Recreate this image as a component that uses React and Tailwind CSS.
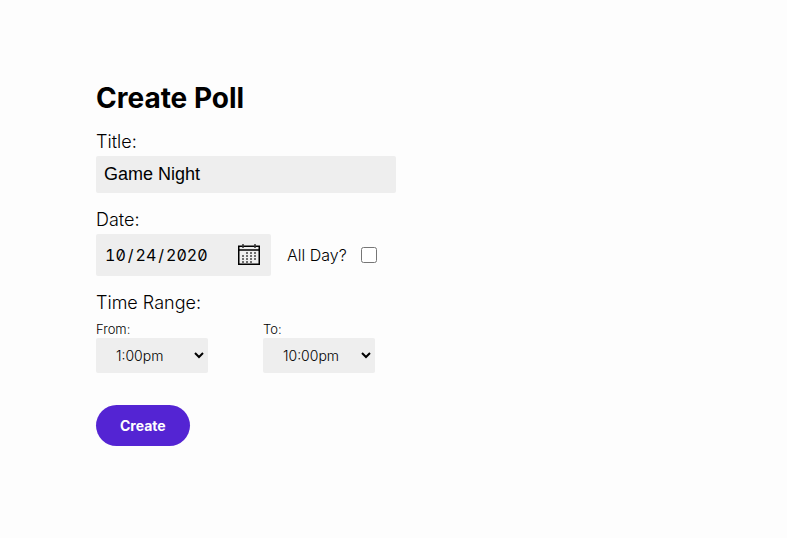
const TIMES = ['12:00pm', '1:00pm', '2:00pm', '6:00pm', '8:00pm', '10:00pm', '11:00pm']

export default function App() {
  return (
    <main className="min-h-screen bg-[#fdfdfd] px-24 py-20 font-['Inter',sans-serif] text-black">
      <h1 className="text-[28px] leading-9 font-bold">Create Poll</h1>

      <form className="mt-3" onSubmit={(e) => e.preventDefault()}>
        <label htmlFor="title" className="block text-lg leading-7 font-light">
          Title:
        </label>
        <input
          id="title"
          type="text"
          defaultValue="Game Night"
          className="block h-[37px] w-full max-w-[300px] rounded-xs bg-[#eee] px-2 font-['Liberation_Sans',sans-serif] text-lg"
        />

        <label htmlFor="date" className="mt-[13px] block text-lg leading-7 font-light">
          Date:
        </label>
        <div className="flex items-center gap-4">
          <div className="relative">
            <input
              id="date"
              type="date"
              defaultValue="2020-10-24"
              className="block h-[42px] w-[175px] rounded-xs bg-[#eee] px-2 text-base slashed-zero tabular-nums [&::-webkit-calendar-picker-indicator]:opacity-0 [&::-webkit-datetime-edit-text]:px-px"
            />
            <CalendarIcon />
          </div>
          <label className="flex items-center gap-3.5 text-base font-light">
            All Day?
            <input type="checkbox" className="size-4" />
          </label>
        </div>

        <fieldset className="mt-[13px]">
          <legend className="text-lg leading-7 font-light">Time Range:</legend>
          <div className="mt-1 flex gap-[55px]">
            <TimeSelect id="from" label="From:" value="1:00pm" />
            <TimeSelect id="to" label="To:" value="10:00pm" />
          </div>
        </fieldset>

        <button
          type="submit"
          className="mt-8 h-[41px] rounded-full bg-[#5424d3] px-6 text-sm font-bold text-white"
        >
          Create
        </button>
      </form>
    </main>
  )
}

function TimeSelect({ id, label, value }) {
  return (
    <div>
      <label htmlFor={id} className="block text-[13px] leading-[17px] font-light">
        {label}
      </label>
      <select
        id={id}
        defaultValue={value}
        className="block h-[35px] w-28 rounded-xs border-r border-[#eee] bg-[#eee] pl-4 text-sm font-light"
      >
        {TIMES.map((time) => (
          <option key={time}>{time}</option>
        ))}
      </select>
    </div>
  )
}

function CalendarIcon() {
  return (
    <svg
      viewBox="0 0 22 22"
      className="pointer-events-none absolute top-2.5 right-[11px] size-[22px]"
      fill="none"
      stroke="#000"
      aria-hidden="true"
    >
      <path d="M.75 2.25h20.5v18H.75z" strokeWidth="1.5" />
      <path d="M1 6h20" strokeWidth="1.5" />
      <path d="M5 0v4M17 0v4" stroke="#333" strokeWidth="1.5" />
      <path
        d="M8 9h10M4 12h14M4 15h14M4 18h10"
        stroke="#444"
        strokeWidth="1.5"
        strokeDasharray="2 2"
      />
    </svg>
  )
}
